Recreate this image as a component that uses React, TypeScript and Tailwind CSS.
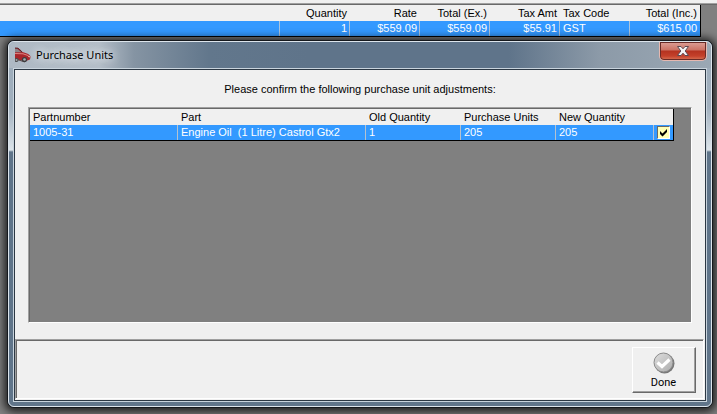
import { useState } from "react";

const invoiceColumns = [
  { label: "Quantity", value: "1", align: "text-right" },
  { label: "Rate", value: "$559.09", align: "text-right" },
  { label: "Total (Ex.)", value: "$559.09", align: "text-right" },
  { label: "Tax Amt", value: "$55.91", align: "text-right" },
  { label: "Tax Code", value: "GST", align: "text-left" },
  { label: "Total (Inc.)", value: "$615.00", align: "text-right" },
];

const unitColumns = [
  { label: "Partnumber", value: "1005-31", width: "w-[148px]" },
  { label: "Part", value: "Engine Oil\u00a0 (1 Litre) Castrol Gtx2", width: "w-[188px]" },
  { label: "Old Quantity", value: "1", width: "w-[95px]" },
  { label: "Purchase Units", value: "205", width: "w-[95px]" },
  { label: "New Quantity", value: "205", width: "w-[98px]" },
];

function CarIcon() {
  return (
    <svg width="16" height="16" viewBox="0 0 16 16" aria-hidden="true">
      <path d="M0 1 L3 1 Q5 2 7.500 5 L12 6.500 Q15.500 8 15.500 10 L15 12.500 L11 14 L4 13 L0 11.500 Z" fill="#a8252b" />
      <path d="M0 1.500 L2.500 2 L6.500 5.200 L0 5.200 Z" fill="#8d8388" />
      <path d="M0 1 L3 1.200 L7 5" stroke="#5b2a30" strokeWidth="1" fill="none" />
      <path d="M0 6.500 L8 6.800 L13 8.500" stroke="#e08480" strokeWidth="1" fill="none" />
      <path d="M0 11.500 L4 13 L10 15" stroke="#5d4a4c" strokeWidth="1.200" fill="none" />
      <circle cx="1.500" cy="13" r="2" fill="#4a4a4c" />
      <circle cx="1.500" cy="13" r="1" fill="#a5a5a7" />
      <circle cx="9.500" cy="12.500" r="2.600" fill="#3d3c3f" />
      <circle cx="9.500" cy="12.500" r="1.300" fill="#a9abad" />
      <path d="M13 9 L15 10" stroke="#f3c2b6" strokeWidth="1" />
    </svg>
  );
}

function CloseIcon() {
  return (
    <svg width="14" height="12" viewBox="0 0 14 12" aria-hidden="true">
      <path
        d="M1.500 1.500 H5 L7 3.800 L9 1.500 H12.500 L9.200 6 L12.500 10.500 H9 L7 8.200 L5 10.500 H1.500 L4.800 6 Z"
        fill="#f4f4f4"
        stroke="#5d4850"
        strokeWidth="1"
      />
    </svg>
  );
}

function DoneIcon() {
  return (
    <svg width="22" height="22" viewBox="0 0 22 22" aria-hidden="true">
      <defs>
        <linearGradient id="disc" x1="0" y1="0" x2="1" y2="1">
          <stop offset="0" stopColor="#dedede" />
          <stop offset="1" stopColor="#acacac" />
        </linearGradient>
      </defs>
      <circle cx="11.500" cy="11.500" r="10" fill="#777777" />
      <circle cx="10.500" cy="10.500" r="9.500" fill="url(#disc)" stroke="#8b8b8b" strokeWidth="1" />
      <path d="M4.500 10.500 L9 14.500 L16.500 7.500" fill="none" stroke="#ffffff" strokeWidth="3.200" />
    </svg>
  );
}

function InvoiceGrid() {
  return (
    <div className="border-t border-[#a0a0a0]">
      <div className="border-t border-[#696969] pr-4">
        <table className="w-full table-fixed border-separate border-spacing-0 border-r border-b border-black bg-[#f0f0f0]">
          <thead>
            <tr className="h-4">
              <th className="p-0" aria-label="Description" />
              {invoiceColumns.map((c) => (
                <th key={c.label} className={`w-[70px] px-[3px] py-0 font-normal ${c.align}`}>
                  {c.label}
                </th>
              ))}
            </tr>
          </thead>
          <tbody>
            <tr className="h-[15px] bg-[#3399ff] text-white">
              <td className="border-r border-[#a9c4df] p-0" />
              {invoiceColumns.map((c) => (
                <td
                  key={c.label}
                  className={`border-r border-[#a9c4df] py-0 pr-0.5 pl-[3px] last:border-[#3399ff] ${c.align}`}
                >
                  {c.value}
                </td>
              ))}
            </tr>
          </tbody>
        </table>
      </div>
    </div>
  );
}

function UnitsGrid() {
  const [checked, setChecked] = useState(true);
  return (
    <div className="flex-1 border border-t-[#a0a0a0] border-r-white border-b-white border-l-[#a0a0a0]">
      <div className="h-full border-t border-l border-[#696969] bg-[#808080]">
        <table className="w-[644px] table-fixed border-separate border-spacing-0 border-r border-b border-black bg-[#f0f0f0]">
          <thead>
            <tr className="h-4">
              {unitColumns.map((c) => (
                <th key={c.label} className={`px-[3px] py-0 text-left font-normal ${c.width}`}>
                  {c.label}
                </th>
              ))}
              <th className="p-0" aria-label="Confirm" />
            </tr>
          </thead>
          <tbody>
            <tr className="h-[15px] bg-[#3399ff] text-white">
              {unitColumns.map((c) => (
                <td key={c.label} className="border-r border-[#b5c2cf] px-[3px] py-0 whitespace-nowrap">
                  {c.value}
                </td>
              ))}
              <td className="p-0">
                <label className="ml-[3px] flex size-[13px] items-center justify-center border border-t-[#696969] border-r-white border-b-white border-l-[#696969] bg-[#ffffb4]">
                  <input
                    type="checkbox"
                    aria-label="Confirm 1005-31"
                    className="peer sr-only"
                    checked={checked}
                    onChange={(e) => setChecked(e.target.checked)}
                  />
                  <svg className="invisible peer-checked:visible" width="9" height="9" viewBox="0 0 9 9" aria-hidden="true">
                    <path d="M1 3 L3.500 5.500 L8 1 V4 L3.500 8.500 L1 6 Z" fill="#000000" />
                  </svg>
                </label>
              </td>
            </tr>
          </tbody>
        </table>
      </div>
    </div>
  );
}

function PurchaseUnitsDialog() {
  return (
    <section
      role="dialog"
      aria-labelledby="dialog-title"
      className="absolute top-10 right-1 bottom-1.5 left-[7px] flex flex-col rounded-[7px] border border-[#15181c] bg-[#60758a] shadow-[0_1px_9px_3px_rgba(0,0,0,0.75)]"
    >
      <div className="flex flex-1 flex-col rounded-md border border-[#dce4eb] bg-[linear-gradient(to_bottom,#9baab8_0px,#a1b0be_65px,#dce4ea_108px,#60758a_110px)] px-1 pb-1">
        <header className="-mx-1 flex h-[26px] items-center justify-between rounded-t-md bg-[linear-gradient(to_right,#aeb9c4_0px,#b4bec8_90px,#8594a3_125px,#62778c_200px,#5f748a_300px,#5f748a_500px,#8c9aa8_590px,#9ba8b4_100%)] pl-1.5">
          <div className="flex items-center gap-[5px]">
            <CarIcon />
            <h1
              id="dialog-title"
              className="font-['Noto_Sans','Open_Sans',sans-serif] text-[11px] leading-4 text-black [text-shadow:0_0_8px_#ffffff,0_0_10px_#e6edf3]"
            >
              Purchase Units
            </h1>
          </div>
          <button
            type="button"
            aria-label="Close"
            className="mr-1 mb-auto flex h-[19px] w-12 items-center justify-center rounded-b-[5px] border border-t-0 border-[#e6b8b0] bg-[linear-gradient(to_bottom,#dda097_0px,#cc7264_8px,#b53320_9px,#c4402a_14px,#de8261_19px)] shadow-[inset_0_0_0_1px_#682b27]"
          >
            <CloseIcon />
          </button>
        </header>
        <div className="flex flex-1 border border-[#c9d4dd]">
          <div className="flex flex-1 flex-col border border-[#2c3844] bg-[#f0f0f0]">
            <div className="flex flex-1 flex-col px-[13px] pb-4">
              <p className="pt-[11px] pb-2.5 text-center leading-4">
                Please confirm the following purchase unit adjustments:
              </p>
              <UnitsGrid />
            </div>
            <footer className="mr-px mb-px border border-t-[#a0a0a0] border-r-white border-b-white border-l-[#a0a0a0]">
              <div className="flex justify-end border-t border-l border-[#696969] pt-1.5 pr-[7px] pb-[5px]">
                <button
                  type="button"
                  className="h-[46px] w-16 border border-t-white border-r-[#696969] border-b-[#696969] border-l-white"
                >
                  <span className="flex h-full flex-col items-center justify-end gap-px border-r border-b border-[#a0a0a0]">
                    <DoneIcon />
                    <span className="font-['Roboto',sans-serif] leading-4">Done</span>
                  </span>
                </button>
              </div>
            </footer>
          </div>
        </div>
      </div>
    </section>
  );
}

export default function App() {
  return (
    <main className="relative min-h-screen overflow-hidden bg-[#808080] pt-[3px] font-['Liberation_Sans',Arial,sans-serif] text-[11px] leading-[15px] text-black before:absolute before:inset-x-0 before:top-0 before:h-[3px] before:bg-[#f0f0f0]">
      <InvoiceGrid />
      <PurchaseUnitsDialog />
    </main>
  );
}
